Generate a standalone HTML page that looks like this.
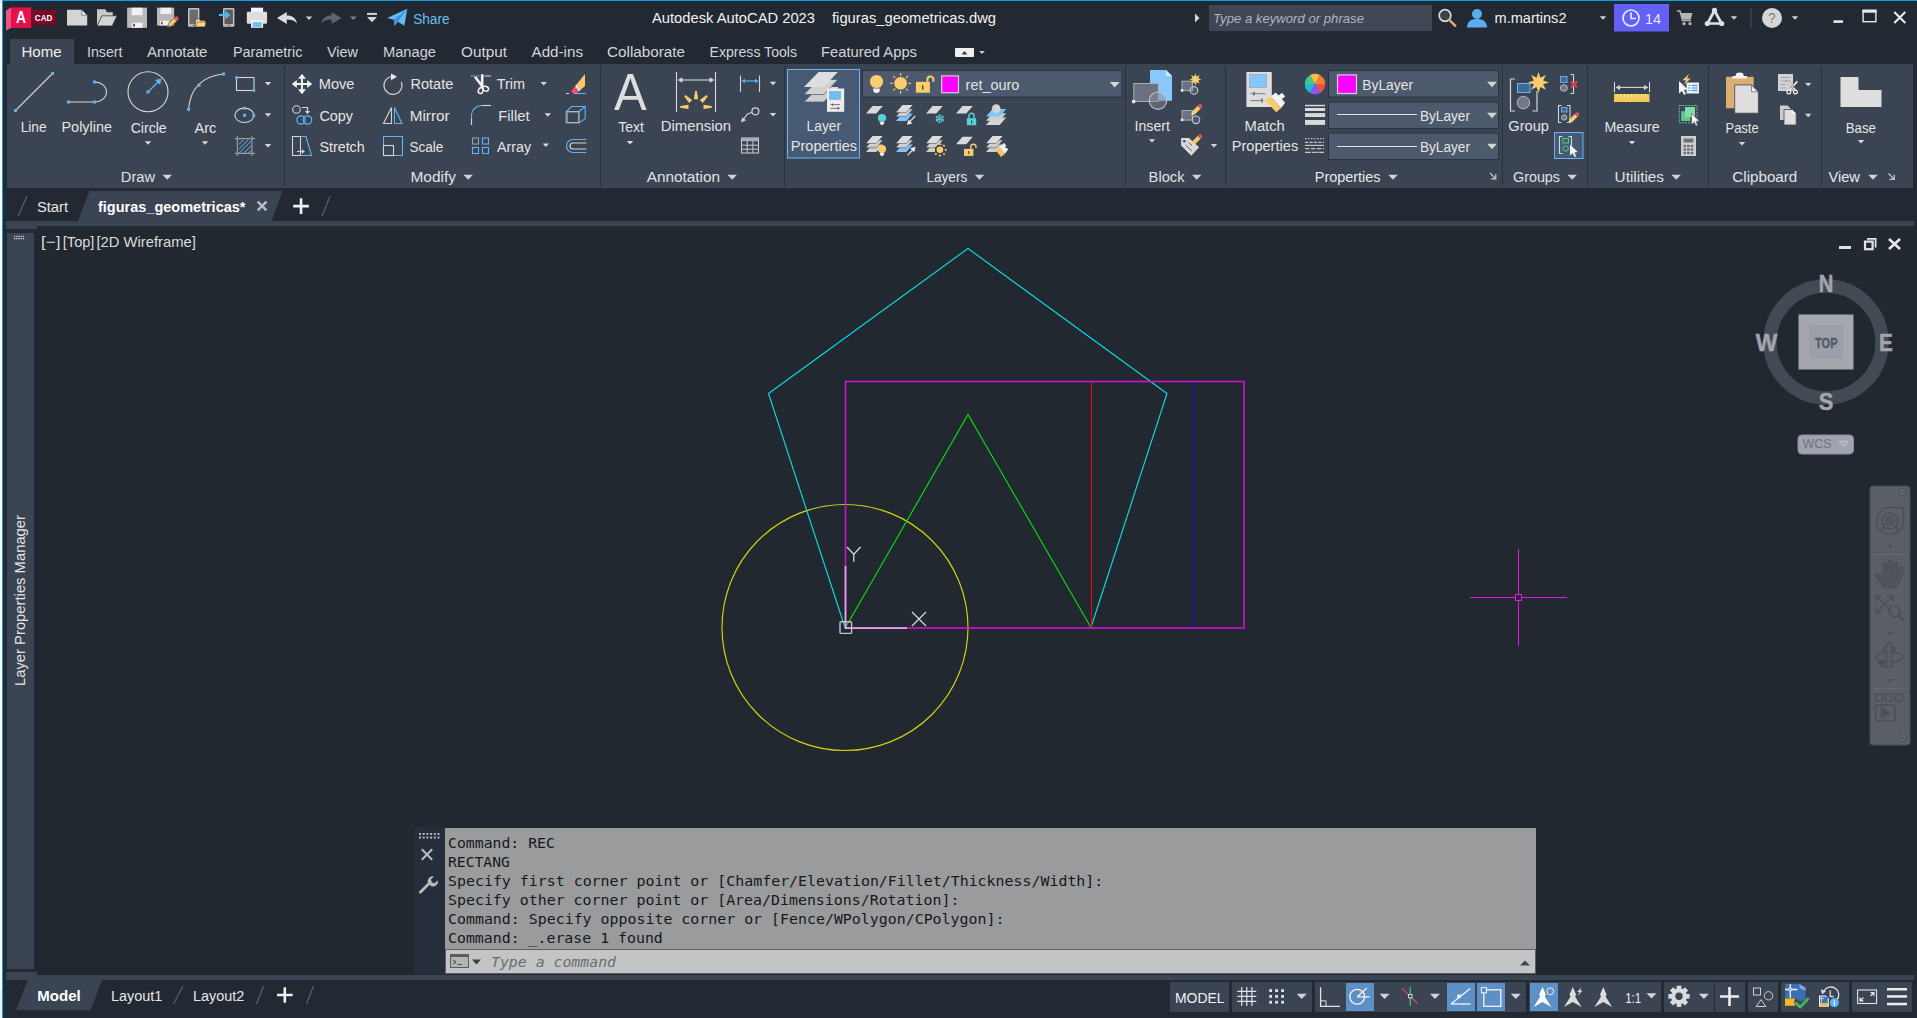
<!DOCTYPE html>
<html><head><meta charset="utf-8"><title>Autodesk AutoCAD 2023 - figuras_geometricas.dwg</title>
<style>
html,body{margin:0;padding:0;background:#222933;overflow:hidden}
svg{display:block;font-family:'Liberation Sans', sans-serif}
text{white-space:pre}
</style></head><body>
<svg width="1917" height="1018" viewBox="0 0 1917 1018">
<rect x="0" y="0" width="1917" height="1018" fill="#222933" />
<rect x="0" y="0" width="2" height="1018" fill="#ffffff" />
<rect x="0" y="0" width="2" height="28" fill="#f3f3f3" />
<rect x="0" y="990" width="2" height="28" fill="#f0eeec" />
<rect x="2" y="0" width="1" height="1018" fill="#0e9fe6" />
<rect x="2" y="0" width="1915" height="1" fill="#0e9fe6" />
<rect x="10" y="39" width="64" height="26" fill="#3b4453" />
<rect x="7" y="64" width="1906" height="124" fill="#3b4453" />
<rect x="6" y="221" width="1908" height="5" fill="#3b4453" />
<rect x="6" y="221" width="31" height="8" fill="#3b4453" />
<rect x="37" y="226" width="1880" height="749" fill="#212830" />
<rect x="7" y="233" width="27" height="736" fill="#3b4453" />
<rect x="6" y="975" width="1908" height="5" fill="#3b4453" />
<rect x="6" y="972" width="31" height="8" fill="#3b4453" />
<path d="M6 10.500L11 7.500V28L6 30.500z" fill="#e9577f"/>
<rect x="11" y="7.4" width="20.2" height="20.6" fill="#e5104c" />
<rect x="31.2" y="10" width="24.8" height="15" fill="#7c0827" />
<text x="16" y="22.8" font-size="15.7" fill="#ffffff" font-weight="bold" textLength="10" lengthAdjust="spacingAndGlyphs" >A</text>
<text x="34.8" y="20.9" font-size="9.5" fill="#ffffff" font-weight="bold" textLength="17.5" lengthAdjust="spacingAndGlyphs" >CAD</text>
<path d="M67 9.800h14.800l5.400 5.400V25.500H67z" fill="#d4d4d4"/><path d="M81.800 9.800v5.400h5.400z" fill="#f4f4f4" stroke="#3a404a" stroke-width="0.600"/>
<path d="M97 9.200h8.300l1.800 3.100h5.700V16h-11l-4.800 9.900z" fill="#c9c9c9"/><path d="M101.900 15.800H117L112.200 25.900H97z" fill="#d4d4d4" stroke="#2a303a" stroke-width="0.700"/>
<rect x="127.100" y="7.700" width="19.900" height="20.100" fill="#b9b9b9"/><rect x="131.700" y="7.700" width="10.900" height="7.500" fill="#f0f0f0"/><rect x="131.700" y="22.700" width="10.900" height="5.100" fill="#f2f2f2"/><rect x="133.200" y="23.800" width="1.700" height="2.800" fill="#3a3f48"/>
<rect x="157" y="7.700" width="17.200" height="17.800" fill="#b9b9b9"/><rect x="160.400" y="7.700" width="10.900" height="6.300" fill="#f0f0f0"/><rect x="159.800" y="20.900" width="9" height="4.600" fill="#f2f2f2"/><rect x="161" y="21.900" width="1.500" height="2.500" fill="#3a3f48"/>
<path d="M167.300 27.500l1.300-4.300l5.800-5.700l3 3l-5.800 5.700z" fill="#f2c568" stroke="#2a303a" stroke-width="0.500"/><path d="M173.600 18.300l1.400-1.400a2.100 2.100 0 0 1 3 3l-1.400 1.400z" fill="#ee5560"/><path d="M167.300 27.500l.9-2.800l1.900 1.900z" fill="#6a6d73"/>
<rect x="188" y="8" width="11.400" height="18.700" rx="1.200" fill="#c2c2c2"/><rect x="189.500" y="9.500" width="8.400" height="14.700" fill="#6b6b6b"/><rect x="192.700" y="25" width="2" height="0.900" fill="#555"/>
<path d="M195.400 19h4l1.200 1.600h4.600v6.100h-9.800z" fill="#f8cd6e" stroke="#2a303a" stroke-width="0.500"/><path d="M197.400 22.200h8.800l-1.600 4.500h-9.200z" fill="#fad583" stroke="#2a303a" stroke-width="0.400"/>
<rect x="223" y="8" width="11.400" height="18.700" rx="1.200" fill="#c2c2c2"/><rect x="224.500" y="9.500" width="8.400" height="14.700" fill="#5a5a5a"/><rect x="227.700" y="25" width="2" height="0.900" fill="#555"/>
<path d="M218.900 15h8" stroke="#52b4f4" stroke-width="2.200" fill="none"/><path d="M225.300 10.700l5.300 4.300l-5.300 4.300z" fill="#52b4f4"/>
<rect x="251" y="7.700" width="12.100" height="5" fill="#f4f4f4"/><rect x="246.800" y="11.800" width="20.300" height="12" rx="1.300" fill="#dedede"/><rect x="251" y="20.400" width="12.100" height="7.400" fill="#f4f4f4"/><rect x="252.600" y="22.100" width="9.100" height="4.900" fill="#6fc0f8"/>
<path d="M277 17.900l9.800-6v3.500c5.500 0 9.200 2.500 10.200 8c-2.600-3-5.700-3.800-10.200-3.800v4.300z" fill="#dcdcdc"/>
<path d="M305.7 16.4h6.6l-3.3 3.6z" fill="#cfcfcf"/>
<path d="M341.400 17.900l-9.800-6v3.500c-5.500 0-9.200 2.500-10.200 8c2.600-3 5.700-3.800 10.200-3.800v4.300z" fill="#5f6570"/>
<path d="M350.0 16.4h6.6l-3.3 3.6z" fill="#7d838c"/>
<rect x="367" y="12.9" width="10" height="2" fill="#d4d4d4" />
<path d="M367 16.900h10l-5 5.400z" fill="#d4d4d4"/>
<path d="M387.200 17.900L407.300 8.700l-3 17.100l-6.300-4l-3.600 4l-.6-6z" fill="#62bbf6"/><path d="M393.800 19.800l13.500-11.100l-9.300 13.100l-3.600 4z" fill="#3d93d4"/>
<text x="413.2" y="24" font-size="15.2" fill="#6cbdf5" textLength="36.4" lengthAdjust="spacingAndGlyphs" >Share</text>
<text x="652" y="23" font-size="15.2" fill="#f2f2f2" textLength="163" lengthAdjust="spacingAndGlyphs" >Autodesk AutoCAD 2023</text>
<text x="832" y="23" font-size="15.2" fill="#f2f2f2" textLength="164" lengthAdjust="spacingAndGlyphs" >figuras_geometricas.dwg</text>
<path d="M1195 13.500v9l4.500-4.500z" fill="#d8d8d8"/>
<rect x="1209" y="5" width="223" height="26" fill="#3f4757" />
<text x="1213" y="23" font-size="13.2" fill="#aeb5c0" font-style="italic" textLength="151" lengthAdjust="spacingAndGlyphs" >Type a keyword or phrase</text>
<circle cx="1445" cy="15.500" r="5.800" fill="#3c424c" stroke="#dcdcdc" stroke-width="1.700"/><path d="M1449.300 19.800l6 6" stroke="#d9b27a" stroke-width="2.400" stroke-linecap="round"/>
<circle cx="1477" cy="14" r="5" fill="#5aaef0"/><path d="M1467 27.500c0-6 4-8.500 10-8.500s10 2.500 10 8.500z" fill="#5aaef0"/>
<text x="1494.5" y="23" font-size="15.2" fill="#f0f0f0" textLength="72.0" lengthAdjust="spacingAndGlyphs" >m.martins2</text>
<path d="M1599.7 16.2h6.6l-3.3 3.6z" fill="#cfcfcf"/>
<rect x="1614" y="4" width="55" height="27.5" fill="#6360f7" />
<circle cx="1631" cy="18" r="8" fill="none" stroke="#e8e8ff" stroke-width="1.700"/><path d="M1631 12.500v6h5" fill="none" stroke="#e8e8ff" stroke-width="1.700"/>
<text x="1645" y="23.5" font-size="15.2" fill="#e8e8ff" textLength="16" lengthAdjust="spacingAndGlyphs" >14</text>
<path d="M1677 11h3l2.500 9.500h8.500" fill="none" stroke="#b6b6b6" stroke-width="1.500"/><path d="M1681 13h11.500l-1.800 6.500h-8z" fill="#b6b6b6"/><circle cx="1684" cy="23.700" r="1.600" fill="#b6b6b6"/><circle cx="1690" cy="23.700" r="1.600" fill="#b6b6b6"/>
<path d="M1714.500 10.500l-7 13h14z" fill="none" stroke="#e0e0e0" stroke-width="2.700" stroke-linejoin="round"/><circle cx="1714.500" cy="10.300" r="2.600" fill="#e0e0e0"/><circle cx="1707.300" cy="23.500" r="2.600" fill="#e0e0e0"/><circle cx="1721.700" cy="23.500" r="2.600" fill="#e0e0e0"/>
<path d="M1730.7 16.2h6.6l-3.3 3.6z" fill="#cfcfcf"/>
<rect x="1750.5" y="8" width="1" height="21" fill="#4a5260" />
<circle cx="1772" cy="18" r="10" fill="#d6d6d6"/>
<text x="1768.3" y="23.3" font-size="15.5" fill="#7c7c7c" textLength="7.4" lengthAdjust="spacingAndGlyphs" >?</text>
<path d="M1791.7 16.2h6.6l-3.3 3.6z" fill="#cfcfcf"/>
<rect x="1833.5" y="20.3" width="9.5" height="2.6" fill="#e8e8e8" />
<rect x="1863.100" y="10.400" width="12.800" height="11.300" fill="none" stroke="#e8e8e8" stroke-width="1.400"/><rect x="1862.400" y="9.700" width="14.200" height="3" fill="#e8e8e8"/>
<path d="M1894.300 12l11 11M1905.300 12l-11 11" stroke="#ececec" stroke-width="2" fill="none"/>
<text x="21.5" y="57" font-size="15.2" fill="#f0f0f0" textLength="40.0" lengthAdjust="spacingAndGlyphs" >Home</text>
<text x="87" y="57" font-size="15.2" fill="#d2d5d9" textLength="35.5" lengthAdjust="spacingAndGlyphs" >Insert</text>
<text x="147" y="57" font-size="15.2" fill="#d2d5d9" textLength="60.5" lengthAdjust="spacingAndGlyphs" >Annotate</text>
<text x="233" y="57" font-size="15.2" fill="#d2d5d9" textLength="69.5" lengthAdjust="spacingAndGlyphs" >Parametric</text>
<text x="327" y="57" font-size="15.2" fill="#d2d5d9" textLength="31" lengthAdjust="spacingAndGlyphs" >View</text>
<text x="383" y="57" font-size="15.2" fill="#d2d5d9" textLength="53" lengthAdjust="spacingAndGlyphs" >Manage</text>
<text x="461" y="57" font-size="15.2" fill="#d2d5d9" textLength="46" lengthAdjust="spacingAndGlyphs" >Output</text>
<text x="531.5" y="57" font-size="15.2" fill="#d2d5d9" textLength="51.5" lengthAdjust="spacingAndGlyphs" >Add-ins</text>
<text x="607" y="57" font-size="15.2" fill="#d2d5d9" textLength="78" lengthAdjust="spacingAndGlyphs" >Collaborate</text>
<text x="709.5" y="57" font-size="15.2" fill="#d2d5d9" textLength="87.5" lengthAdjust="spacingAndGlyphs" >Express Tools</text>
<text x="821" y="57" font-size="15.2" fill="#d2d5d9" textLength="96" lengthAdjust="spacingAndGlyphs" >Featured Apps</text>
<rect x="955" y="48" width="19" height="9" rx="1" fill="#f0f0f0"/><path d="M961.500 54.500h6l-3-3.400z" fill="#3a404a"/>
<path d="M979.2 51.0h5.6l-2.8 3z" fill="#cfcfcf"/>
<path d="M89.500 191H282.500L271.500 221H78z" fill="#3b4453"/>
<line x1="18" y1="216" x2="27" y2="196" stroke="#596272" stroke-width="1.2" />
<text x="37" y="212" font-size="15.2" fill="#e6e6e6" textLength="31" lengthAdjust="spacingAndGlyphs" >Start</text>
<text x="98" y="212" font-size="15.2" fill="#ffffff" font-weight="bold" textLength="147.5" lengthAdjust="spacingAndGlyphs" >figuras_geometricas*</text>
<path d="M257.700 201.600l8.800 8.800M266.500 201.600l-8.800 8.800" stroke="#b8bcc4" stroke-width="2.500" fill="none"/>
<path d="M293.200 206.100h15.700M301.050 198.300v15.700" stroke="#f0f0f0" stroke-width="2.600" fill="none"/>
<line x1="322" y1="216" x2="330.2" y2="196" stroke="#596272" stroke-width="1.2" />
<rect x="284.0" y="65.5" width="1" height="121" fill="#2a313c" />
<rect x="600.0" y="65.5" width="1" height="121" fill="#2a313c" />
<rect x="784.0" y="65.5" width="1" height="121" fill="#2a313c" />
<rect x="1125.0" y="65.5" width="1" height="121" fill="#2a313c" />
<rect x="1225.0" y="65.5" width="1" height="121" fill="#2a313c" />
<rect x="1502.0" y="65.5" width="1" height="121" fill="#2a313c" />
<rect x="1587.0" y="65.5" width="1" height="121" fill="#2a313c" />
<rect x="1708.0" y="65.5" width="1" height="121" fill="#2a313c" />
<rect x="1821.0" y="65.5" width="1" height="121" fill="#2a313c" />
<line x1="15.5" y1="110.5" x2="52.5" y2="73.5" stroke="#d6d6d6" stroke-width="1.1" />
<rect x="14.0" y="109.0" width="3" height="3" fill="#5fb4f4" />
<rect x="51.0" y="72.0" width="3" height="3" fill="#5fb4f4" />
<text x="20.7" y="131.6" font-size="15.2" fill="#e4e4e4" textLength="25.9" lengthAdjust="spacingAndGlyphs" >Line</text>
<path d="M68.5 102H94.500A12 10 0 0 0 94.500 82" fill="none" stroke="#d6d6d6" stroke-width="1.1"/>
<rect x="67.0" y="100.5" width="3" height="3" fill="#5fb4f4" />
<rect x="93.0" y="100.5" width="3" height="3" fill="#5fb4f4" />
<rect x="93.0" y="80.5" width="3" height="3" fill="#5fb4f4" />
<text x="61.5" y="131.6" font-size="15.2" fill="#e4e4e4" textLength="50.5" lengthAdjust="spacingAndGlyphs" >Polyline</text>
<circle cx="148" cy="91.700" r="20" fill="none" stroke="#d6d6d6" stroke-width="1.1"/>
<path d="M148 92L159 81" stroke="#5fb4f4" stroke-width="1.300"/><path d="M161.500 78.500l-1.500 6.500l-5-5z" fill="#5fb4f4"/>
<rect x="146.5" y="90.5" width="3" height="3" fill="#5fb4f4" />
<text x="130.7" y="132.7" font-size="15.2" fill="#e4e4e4" textLength="36.0" lengthAdjust="spacingAndGlyphs" >Circle</text>
<path d="M144.8 141.3h6.4l-3.2 3.4z" fill="#d8d8d8"/>
<path d="M188.600 109.400C190 88 203 76 223.500 74" fill="none" stroke="#d6d6d6" stroke-width="1.100"/>
<rect x="187.1" y="107.9" width="3" height="3" fill="#5fb4f4" />
<rect x="197.5" y="83.8" width="3" height="3" fill="#5fb4f4" />
<rect x="222.0" y="72.5" width="3" height="3" fill="#5fb4f4" />
<text x="194.5" y="132.7" font-size="15.2" fill="#e4e4e4" textLength="21.8" lengthAdjust="spacingAndGlyphs" >Arc</text>
<path d="M201.8 141.3h6.4l-3.2 3.4z" fill="#d8d8d8"/>
<rect x="236.500" y="77.500" width="17.500" height="13" fill="none" stroke="#d6d6d6" stroke-width="1.100"/>
<rect x="235.2" y="76.2" width="2.6" height="2.6" fill="#5fb4f4" />
<rect x="252.7" y="89.2" width="2.6" height="2.6" fill="#5fb4f4" />
<path d="M264.8 82.1h6.4l-3.2 3.4z" fill="#d8d8d8"/>
<ellipse cx="244.400" cy="115.300" rx="9.500" ry="7.200" fill="none" stroke="#d6d6d6" stroke-width="1.100"/>
<rect x="243.0" y="113.8" width="3" height="3" fill="#5fb4f4" />
<rect x="252.2" y="113.8" width="3" height="3" fill="#5fb4f4" />
<rect x="243.0" y="106.7" width="3" height="3" fill="#5fb4f4" />
<path d="M264.8 113.3h6.4l-3.2 3.4z" fill="#d8d8d8"/>
<path d="M238.800 144.500l4.700-4.700M238.800 149.300l9.500-9.500M239.300 153l12-12.200M244 153l7.500-7.500M248.500 153l3-3" stroke="#5fb4f4" stroke-width="1" fill="none"/>
<path d="M235 138.600H255M235 153.400H255M237.400 136V156M251.900 136V156" stroke="#989da6" stroke-width="1.100" fill="none"/>
<path d="M264.8 144.10000000000002h6.4l-3.2 3.4z" fill="#d8d8d8"/>
<text x="120.8" y="181.7" font-size="15.2" fill="#e2e2e2" textLength="34.2" lengthAdjust="spacingAndGlyphs" >Draw</text>
<path d="M162.5 174.8h9.4l-4.7 5z" fill="#d4d4d4"/>
<path d="M302 73.800l4 5h-3v4.200h4.200v-3l5 4l-5 4v-3h-4.200v4.200h3l-4 5l-4-5h3v-4.200h-4.200v3l-5-4l5-4v3h4.200v-4.200h-3z" fill="#f2f2f2"/>
<text x="318.7" y="89.2" font-size="15.2" fill="#e4e4e4" textLength="35.8" lengthAdjust="spacingAndGlyphs" >Move</text>
<circle cx="296.500" cy="109.500" r="3.800" fill="none" stroke="#d6d6d6" stroke-width="1.100"/><path d="M302 107.500h5.500v4" fill="none" stroke="#d6d6d6" stroke-width="1.200"/><path d="M305 111l2.500 3.200l2.500-3.200z" fill="#d6d6d6"/>
<circle cx="301" cy="120" r="4.200" fill="none" stroke="#5fb4f4" stroke-width="1.200"/><circle cx="307.500" cy="120" r="4.200" fill="none" stroke="#5fb4f4" stroke-width="1.200"/>
<text x="319.5" y="120.7" font-size="15.2" fill="#e4e4e4" textLength="33.5" lengthAdjust="spacingAndGlyphs" >Copy</text>
<path d="M300.500 136.500H292.500V155.500H300.500" fill="none" stroke="#d6d6d6" stroke-width="1.100"/><path d="M300.500 136.500V155.500" stroke="#d6d6d6" stroke-width="1.100"/><path d="M300.500 136.500H306L311.500 155.500H300.500" fill="none" stroke="#5fb4f4" stroke-width="1.100"/><path d="M297 151.500h5.500" stroke="#d6d6d6" stroke-width="1.100"/><path d="M302 149.300l3 2.200l-3 2.200z" fill="#d6d6d6"/>
<text x="319.5" y="152" font-size="15.2" fill="#e4e4e4" textLength="45.2" lengthAdjust="spacingAndGlyphs" >Stretch</text>
<path d="M391.500 76.500A9 9 0 1 0 401.300 82" fill="none" stroke="#d6d6d6" stroke-width="1.200"/><path d="M391 73.500l6 3.200l-6 3.600z" fill="#ececec"/>
<text x="410.5" y="89.2" font-size="15.2" fill="#e4e4e4" textLength="42.8" lengthAdjust="spacingAndGlyphs" >Rotate</text>
<path d="M391.500 107.500V123.500H383.500z" fill="none" stroke="#d6d6d6" stroke-width="1.100"/><path d="M394.500 107.500V123.500H402z" fill="none" stroke="#5fb4f4" stroke-width="1.100"/>
<text x="409.7" y="120.7" font-size="15.2" fill="#e4e4e4" textLength="40.0" lengthAdjust="spacingAndGlyphs" >Mirror</text>
<path d="M383.500 145V136.500H402.500V155.500H394" fill="none" stroke="#5fb4f4" stroke-width="1.100"/><rect x="383.500" y="145.500" width="10" height="10" fill="none" stroke="#d6d6d6" stroke-width="1.100"/>
<text x="409.5" y="152" font-size="15.2" fill="#e4e4e4" textLength="33.8" lengthAdjust="spacingAndGlyphs" >Scale</text>
<path d="M471 76h8.500" stroke="#5fb4f4" stroke-width="1.300" stroke-dasharray="1.600 0.900"/><path d="M484.500 76h6.600" stroke="#b9bcc2" stroke-width="1.300"/>
<path d="M473.800 77.300l2.600-.8l7.400 9.700l-2 1.500z" fill="#f2f2f2"/><path d="M480.900 74.300h2.700l-.2 12.200l-2.600.4z" fill="#f2f2f2"/>
<ellipse cx="480.700" cy="90.600" rx="2.300" ry="3" fill="none" stroke="#f2f2f2" stroke-width="1.500" transform="rotate(20 480.700 90.600)"/><ellipse cx="485.600" cy="88.700" rx="3" ry="2.300" fill="none" stroke="#f2f2f2" stroke-width="1.500" transform="rotate(20 485.600 88.700)"/>
<text x="496.7" y="89.2" font-size="15.2" fill="#e4e4e4" textLength="28.3" lengthAdjust="spacingAndGlyphs" >Trim</text>
<path d="M540.5 82.0h6.4l-3.2 3.4z" fill="#d8d8d8"/>
<path d="M471.500 125V115A10 10 0 0 1 481.500 105.500" fill="none" stroke="#5fb4f4" stroke-width="1.100"/><path d="M481.500 105.500H491" stroke="#d6d6d6" stroke-width="1.100"/><path d="M471.500 119V125" stroke="#d6d6d6" stroke-width="1.100"/>
<text x="498.3" y="120.7" font-size="15.2" fill="#e4e4e4" textLength="31.2" lengthAdjust="spacingAndGlyphs" >Fillet</text>
<path d="M544.5999999999999 113.3h6.4l-3.2 3.4z" fill="#d8d8d8"/>
<rect x="472.500" y="138" width="6" height="6" fill="none" stroke="#9aa0aa" stroke-width="1.100"/><rect x="482.500" y="138" width="6" height="6" fill="none" stroke="#5fb4f4" stroke-width="1.100"/><rect x="472.500" y="147.500" width="6" height="6" fill="none" stroke="#5fb4f4" stroke-width="1.100"/><rect x="482.500" y="147.500" width="6" height="6" fill="none" stroke="#5fb4f4" stroke-width="1.100"/>
<text x="497" y="152" font-size="15.2" fill="#e4e4e4" textLength="34" lengthAdjust="spacingAndGlyphs" >Array</text>
<path d="M542.5999999999999 143.60000000000002h6.4l-3.2 3.4z" fill="#d8d8d8"/>
<path d="M576.500 84.500l8.500-10.500v12l-4.500 4z" fill="#f5c86a"/><path d="M571.500 90.500l5-6l4 5.500l-3.500 3c-2 1.500-6.500 0-5.500-2.500z" fill="#ee4f58"/><path d="M575.200 86.200l1.300-1.700l4 5.500l-1.500 1.300z" fill="#f4f4f4"/>
<path d="M566 93.500h3" stroke="#d6d6d6" stroke-width="1"/><path d="M574 93.500h12" stroke="#5fb4f4" stroke-width="1.100"/>
<path d="M566.500 111.500l5-5h13.700v12.200l-6 4.200" fill="none" stroke="#5fb4f4" stroke-width="1.100"/><path d="M579 111.500l6.200-5" fill="none" stroke="#5fb4f4" stroke-width="1.100"/><rect x="566.900" y="111.700" width="12" height="11" fill="none" stroke="#b9bcc2" stroke-width="1.300"/><path d="M566 111v12.400" stroke="#5fb4f4" stroke-width="0.800"/>
<path d="M586.300 139.500H573A6.500 6.500 0 0 0 573 152.500H586.300" fill="none" stroke="#5fb4f4" stroke-width="1.200"/><path d="M586.300 143H573A3 3 0 0 0 573 149H586.300" fill="none" stroke="#d6d6d6" stroke-width="1.200"/>
<text x="410.5" y="181.7" font-size="15.2" fill="#e2e2e2" textLength="45.5" lengthAdjust="spacingAndGlyphs" >Modify</text>
<path d="M463.5 174.8h9.4l-4.7 5z" fill="#d4d4d4"/>
<text x="614" y="109.6" font-size="51" fill="#dedede" textLength="32.7" lengthAdjust="spacingAndGlyphs" >A</text>
<text x="618.3" y="132.4" font-size="15.2" fill="#e4e4e4" textLength="25.6" lengthAdjust="spacingAndGlyphs" >Text</text>
<path d="M626.8 141.0h6.4l-3.2 3.4z" fill="#d8d8d8"/>
<path d="M676.500 72V112M715.500 72V112" stroke="#d6d6d6" stroke-width="1.100"/><path d="M681 80H711" stroke="#d6d6d6" stroke-width="1.100"/><path d="M677.500 80l5-2.800v5.600zM714.500 80l-5-2.800v5.600z" fill="#d6d6d6"/>
<path d="M-2.100 -7.500L-0.900 -15.800H0.900L2.100 -7.500z" fill="#f8cd6e" transform="translate(696,106.800) rotate(-90)"/>
<path d="M-2.100 -7.500L-0.900 -15.800H0.900L2.100 -7.500z" fill="#f8cd6e" transform="translate(696,106.800) rotate(-45)"/>
<path d="M-2.100 -7.500L-0.900 -15.800H0.900L2.100 -7.500z" fill="#f8cd6e" transform="translate(696,106.800) rotate(0)"/>
<path d="M-2.100 -7.500L-0.900 -15.800H0.900L2.100 -7.500z" fill="#f8cd6e" transform="translate(696,106.800) rotate(45)"/>
<path d="M-2.100 -7.500L-0.900 -15.800H0.900L2.100 -7.500z" fill="#f8cd6e" transform="translate(696,106.800) rotate(90)"/>
<text x="660.8" y="131.4" font-size="15.2" fill="#e4e4e4" textLength="70.2" lengthAdjust="spacingAndGlyphs" >Dimension</text>
<path d="M740.500 75.500V92M759.500 75.500V92" stroke="#d6d6d6" stroke-width="1.100"/><path d="M743.500 81H756.500" stroke="#5fb4f4" stroke-width="1.200"/><path d="M741.500 81l3.500-2.200v4.400zM758.500 81l-3.500-2.200v4.400z" fill="#5fb4f4"/>
<path d="M769.8 81.8h6.4l-3.2 3.4z" fill="#d8d8d8"/>
<circle cx="755.400" cy="111.300" r="3.500" fill="none" stroke="#d6d6d6" stroke-width="1.200"/><path d="M752 112.500l-4.500 1.500l-4.500 6" fill="none" stroke="#d6d6d6" stroke-width="1.200"/><path d="M741 122.500l1.200-5.200l3.800 3z" fill="#d6d6d6"/>
<path d="M769.8 113.1h6.4l-3.2 3.4z" fill="#d8d8d8"/>
<rect x="741.500" y="138" width="17" height="15" fill="none" stroke="#c8c8c8" stroke-width="1.100"/><rect x="741.500" y="138" width="17" height="3.200" fill="#a9adb3"/><path d="M741.500 145.200h17M741.500 149.200h17M747.200 141v12M752.900 141v12" stroke="#c8c8c8" stroke-width="1"/>
<text x="646.7" y="181.7" font-size="15.2" fill="#e2e2e2" textLength="73.3" lengthAdjust="spacingAndGlyphs" >Annotation</text>
<path d="M727.5 174.8h9.4l-4.7 5z" fill="#d4d4d4"/>
<rect x="787.500" y="69.500" width="72" height="88.500" fill="#465a73" stroke="#6db3f2" stroke-width="1"/>
<path d="M818.600 87.0h19.300l-14.100 15h-19.800z" fill="#cdcdcd"/>
<path d="M818.600 87.0h19.300l-14.100 15h-19.800z" fill="none" stroke="#465a73" stroke-width="0.700"/>
<path d="M818.600 79.5h19.300l-14.100 15h-19.800z" fill="#d2d2d2"/>
<path d="M818.600 79.5h19.300l-14.100 15h-19.800z" fill="none" stroke="#465a73" stroke-width="0.700"/>
<path d="M818.600 72.0h19.300l-14.100 15h-19.800z" fill="#dedede"/>
<rect x="831" y="87" width="7" height="3" fill="#dcdcdc"/><rect x="827" y="88.500" width="17.200" height="23.300" fill="#ececec"/><rect x="829.300" y="91.400" width="11.300" height="8" fill="#6ebcf8" stroke="#9aa0a8" stroke-width="0.600"/><path d="M830.500 104.600h9.500M830.500 108.300h9.500" stroke="#666" stroke-width="0.900"/><path d="M832.500 103.400v2.400M838 107.100v2.400" stroke="#555" stroke-width="1.100"/>
<text x="806.6" y="131.4" font-size="15.2" fill="#e4e4e4" textLength="34.4" lengthAdjust="spacingAndGlyphs" >Layer</text>
<text x="790.8" y="151.4" font-size="15.2" fill="#e4e4e4" textLength="66.2" lengthAdjust="spacingAndGlyphs" >Properties</text>
<rect x="862.500" y="70.500" width="259.500" height="26.500" fill="#4d596d" stroke="#2c333f" stroke-width="1"/>
<circle cx="876.500" cy="81.500" r="6.600" fill="#f8cd6e"/><path d="M873.200 88.600h6.600v1.300a3.300 3 0 0 1-6.600 0z" fill="#f2f2f2"/>
<circle cx="900.600" cy="83.300" r="6.300" fill="#f8cd6e"/>
<path d="M0 -7.600V-10.400" stroke="#f8cd6e" stroke-width="1.100" transform="translate(900.600,83.300) rotate(0)"/>
<path d="M0 -7.600V-10.400" stroke="#f8cd6e" stroke-width="1.100" transform="translate(900.600,83.300) rotate(45)"/>
<path d="M0 -7.600V-10.400" stroke="#f8cd6e" stroke-width="1.100" transform="translate(900.600,83.300) rotate(90)"/>
<path d="M0 -7.600V-10.400" stroke="#f8cd6e" stroke-width="1.100" transform="translate(900.600,83.300) rotate(135)"/>
<path d="M0 -7.600V-10.400" stroke="#f8cd6e" stroke-width="1.100" transform="translate(900.600,83.300) rotate(180)"/>
<path d="M0 -7.600V-10.400" stroke="#f8cd6e" stroke-width="1.100" transform="translate(900.600,83.300) rotate(225)"/>
<path d="M0 -7.600V-10.400" stroke="#f8cd6e" stroke-width="1.100" transform="translate(900.600,83.300) rotate(270)"/>
<path d="M0 -7.600V-10.400" stroke="#f8cd6e" stroke-width="1.100" transform="translate(900.600,83.300) rotate(315)"/>
<rect x="915.900" y="81.800" width="14" height="10.900" fill="#f8cd6e"/><path d="M927.400 81.800v-2.300a3 3 0 0 1 6 0v2.300" fill="none" stroke="#f8cd6e" stroke-width="2.100"/><rect x="922" y="85.300" width="1.400" height="4.400" fill="#5b4a20"/>
<rect x="941.700" y="75.900" width="16.800" height="16.800" fill="#ff00ff" stroke="#cfd0da" stroke-width="1.200"/>
<text x="965.6" y="90.2" font-size="15.2" fill="#e4e4e4" textLength="53.8" lengthAdjust="spacingAndGlyphs" >ret_ouro</text>
<path d="M1109.7 82.0h10l-5.0 5.4z" fill="#d4d4d4"/>
<path d="M872.5 106h10.3l-6.5 7.5h-10.3z" fill="#d9d9d9"/>
<circle cx="882" cy="118" r="4.100" fill="#58d0d8"/><path d="M879.6 122h4.800l-1 2.400l-1.400 .8l-1.400-.8z" fill="#f2f2f2"/>
<path d="M902.5 113.4h10.3l-6.5 7.5h-10.3z" fill="#7cc6fb"/>
<path d="M902.5 109.15h10.3l-6.5 7.5h-10.3z" fill="#cfcfcf"/>
<path d="M896 116.65h10.300l6.500 -7.500" fill="none" stroke="#4a505c" stroke-width="0.800" opacity="0.700"/>
<path d="M902.5 104.9h10.3l-6.5 7.5h-10.3z" fill="#dcdcdc"/>
<path d="M896 112.4h10.300l6.500 -7.500" fill="none" stroke="#4a505c" stroke-width="0.800" opacity="0.700"/>
<path d="M915.200 116l-6 6.300" stroke="#e0e0e0" stroke-width="1.200"/><path d="M907 124.800l1.400-5.400l4 4z" fill="#ececec"/>
<path d="M932.5 106h10.3l-6.5 7.5h-10.3z" fill="#d9d9d9"/>
<path d="M0 -4.600V4.600M-1.500 -3.600L0 -2.300L1.500 -3.600M-1.500 3.600L0 2.300L1.500 3.600" stroke="#58d0d8" stroke-width="0.900" fill="none" transform="translate(939.700,118.700) rotate(0)"/>
<path d="M0 -4.600V4.600M-1.500 -3.600L0 -2.300L1.500 -3.600M-1.500 3.600L0 2.300L1.500 3.600" stroke="#58d0d8" stroke-width="0.900" fill="none" transform="translate(939.700,118.700) rotate(60)"/>
<path d="M0 -4.600V4.600M-1.500 -3.600L0 -2.300L1.500 -3.600M-1.500 3.600L0 2.300L1.500 3.600" stroke="#58d0d8" stroke-width="0.900" fill="none" transform="translate(939.700,118.700) rotate(120)"/>
<path d="M962.5 106h10.3l-6.5 7.5h-10.3z" fill="#d9d9d9"/>
<rect x="966.8" y="118.2" width="9.400" height="7" fill="#58d0d8"/>
<path d="M968.9 118.2v-2.400a2.600 2.600 0 0 1 5.200 0v2.400" fill="none" stroke="#58d0d8" stroke-width="1.400"/>
<rect x="971.0" y="120.4" width="1.200" height="3" fill="#3b4453"/>
<path d="M992.5 117.5h13.7l-6.5 7.5h-13.7z" fill="#d6d6d6"/>
<path d="M992.5 113.3h13.7l-6.5 7.5h-13.7z" fill="#cfcfcf"/>
<path d="M992.5 109h13.7l-6.5 7.5h-13.7z" fill="#7cc6fb"/>
<circle cx="996.200" cy="108.600" r="4.300" fill="#d4d4d4"/>
<path d="M872.5 144.5h10.3l-6.5 7.5h-10.3z" fill="#cfcfcf"/>
<path d="M872.5 140.25h10.3l-6.5 7.5h-10.3z" fill="#cfcfcf"/>
<path d="M866 147.75h10.300l6.500 -7.500" fill="none" stroke="#4a505c" stroke-width="0.800" opacity="0.700"/>
<path d="M872.5 136.0h10.3l-6.5 7.5h-10.3z" fill="#dcdcdc"/>
<path d="M866 143.5h10.300l6.500 -7.500" fill="none" stroke="#4a505c" stroke-width="0.800" opacity="0.700"/>
<circle cx="882" cy="149.1" r="4.100" fill="#f8cd6e"/><path d="M879.6 153.1h4.800l-1 2.400l-1.400 .8l-1.400-.8z" fill="#f2f2f2"/>
<path d="M902.5 144.5h10.3l-6.5 7.5h-10.3z" fill="#7cc6fb"/>
<path d="M902.5 140.25h10.3l-6.5 7.5h-10.3z" fill="#cfcfcf"/>
<path d="M896 147.75h10.300l6.500 -7.500" fill="none" stroke="#4a505c" stroke-width="0.800" opacity="0.700"/>
<path d="M902.5 136.0h10.3l-6.5 7.5h-10.3z" fill="#dcdcdc"/>
<path d="M896 143.5h10.300l6.500 -7.500" fill="none" stroke="#4a505c" stroke-width="0.800" opacity="0.700"/>
<path d="M907.500 155.300l6-6.300" stroke="#e0e0e0" stroke-width="1.200"/><path d="M915.600 146.800l-1.400 5.400l-4-4z" fill="#ececec"/>
<path d="M932.5 144.5h10.3l-6.5 7.5h-10.3z" fill="#cfcfcf"/>
<path d="M932.5 140.25h10.3l-6.5 7.5h-10.3z" fill="#cfcfcf"/>
<path d="M926 147.75h10.300l6.500 -7.500" fill="none" stroke="#4a505c" stroke-width="0.800" opacity="0.700"/>
<path d="M932.5 136.0h10.3l-6.5 7.5h-10.3z" fill="#dcdcdc"/>
<path d="M926 143.5h10.300l6.500 -7.500" fill="none" stroke="#4a505c" stroke-width="0.800" opacity="0.700"/>
<circle cx="939.900" cy="149.800" r="5.200" fill="#3b4453"/><circle cx="939.900" cy="149.800" r="3.300" fill="#f8cd6e"/>
<rect x="-0.900" y="-6.700" width="1.800" height="1.800" fill="#f8cd6e" transform="translate(939.900,149.800) rotate(0)"/>
<rect x="-0.900" y="-6.700" width="1.800" height="1.800" fill="#f8cd6e" transform="translate(939.900,149.800) rotate(45)"/>
<rect x="-0.900" y="-6.700" width="1.800" height="1.800" fill="#f8cd6e" transform="translate(939.900,149.800) rotate(90)"/>
<rect x="-0.900" y="-6.700" width="1.800" height="1.800" fill="#f8cd6e" transform="translate(939.900,149.800) rotate(135)"/>
<rect x="-0.900" y="-6.700" width="1.800" height="1.800" fill="#f8cd6e" transform="translate(939.900,149.800) rotate(180)"/>
<rect x="-0.900" y="-6.700" width="1.800" height="1.800" fill="#f8cd6e" transform="translate(939.900,149.800) rotate(225)"/>
<rect x="-0.900" y="-6.700" width="1.800" height="1.800" fill="#f8cd6e" transform="translate(939.900,149.800) rotate(270)"/>
<rect x="-0.900" y="-6.700" width="1.800" height="1.800" fill="#f8cd6e" transform="translate(939.900,149.800) rotate(315)"/>
<path d="M962.5 136.7h10.3l-6.5 7.5h-10.3z" fill="#d9d9d9"/>
<rect x="964" y="148.9" width="9.400" height="7" fill="#f8cd6e"/>
<path d="M970.8 148.9v-2a2.600 2.600 0 0 1 5.200 0v1.200" fill="none" stroke="#f8cd6e" stroke-width="1.400"/>
<rect x="968.2" y="151.1" width="1.200" height="3" fill="#3b4453"/>
<path d="M992.5 144.5h10.3l-6.5 7.5h-10.3z" fill="#cfcfcf"/>
<path d="M992.5 140.25h10.3l-6.5 7.5h-10.3z" fill="#cfcfcf"/>
<path d="M986 147.75h10.300l6.500 -7.500" fill="none" stroke="#4a505c" stroke-width="0.800" opacity="0.700"/>
<path d="M992.5 136.0h10.3l-6.5 7.5h-10.3z" fill="#dcdcdc"/>
<path d="M986 143.5h10.300l6.500 -7.500" fill="none" stroke="#4a505c" stroke-width="0.800" opacity="0.700"/>
<path d="M995.500 150l3.800-3l5.500 7l-3.800 3z" fill="#f5c85a"/><path d="M999.300 147l3.200-2.500l1.500-1.800l2.500 3.200l-2 1.200l3.800 1.800l-3.500 5z" fill="#f2f2f2"/>
<text x="926.4" y="181.7" font-size="15.2" fill="#e2e2e2" textLength="40.9" lengthAdjust="spacingAndGlyphs" >Layers</text>
<path d="M974.8 174.8h9.4l-4.7 5z" fill="#d4d4d4"/>
<path d="M1150 70h16l6 6v24.700h-22z" fill="#88c9fb"/><path d="M1166 70v6h6z" fill="#cfe8fb"/>
<rect x="1133.800" y="83.500" width="24.500" height="18" fill="#6c7180" stroke="#a9adb5" stroke-width="1"/><rect x="1132" y="100" width="3.200" height="3.200" fill="#e8e8e8"/>
<circle cx="1158" cy="100.700" r="8.700" fill="#8a8f9a" fill-opacity="0.450" stroke="#c4c7cc" stroke-width="1.100"/>
<text x="1134.5" y="131" font-size="15.2" fill="#e4e4e4" textLength="35.5" lengthAdjust="spacingAndGlyphs" >Insert</text>
<path d="M1148.8 139.20000000000002h6.4l-3.2 3.4z" fill="#d8d8d8"/>
<rect x="1182" y="81.2" width="10.600" height="9.500" fill="#6c7180" stroke="#b4b7be" stroke-width="0.900"/><rect x="1180.8" y="89.2" width="2.500" height="2.500" fill="#ececec"/><circle cx="1194" cy="90.4" r="3.800" fill="#8a8f9a" fill-opacity="0.300" stroke="#c4c7cc" stroke-width="1.100"/>
<path d="M0 -6L1.200 -2.900L4.200 -4.200L2.900 -1.200L6 0L2.900 1.200L4.200 4.200L1.200 2.900L0 6L-1.200 2.900L-4.200 4.200L-2.900 1.200L-6 0L-2.900 -1.200L-4.200 -4.200L-1.200 -2.900z" fill="#f8cd6e" transform="translate(1195.400,79.400)"/>
<rect x="1182" y="110.6" width="10.600" height="9.500" fill="#6c7180" stroke="#b4b7be" stroke-width="0.900"/><rect x="1180.8" y="118.6" width="2.500" height="2.500" fill="#ececec"/><circle cx="1196" cy="119.8" r="3.800" fill="#8a8f9a" fill-opacity="0.300" stroke="#c4c7cc" stroke-width="1.100"/>
<g transform="translate(1191,107.6) scale(0.87)"><path d="M0 9l1.500-4.800l6.200-6.200l3.300 3.300l-6.200 6.200z" fill="#f5c86a"/><path d="M7.700 -2l1.200-1.200a2.300 2.300 0 0 1 3.300 3.300l-1.200 1.200z" fill="#ee4f58"/><path d="M0 9l1.100-3.500l2.400 2.400z" fill="#e8e8e8"/><path d="M0 9l.5-1.500l1 1z" fill="#3a3f48"/></g>
<path d="M1181.100 138h7.900l10.100 9.300l-7.800 8.500l-10.200-10.400z" fill="#d9d9d9"/><circle cx="1184.300" cy="141.200" r="1.200" fill="#3b4453"/><path d="M1185.500 145l6.500 6M1188.500 142.500l3 2.800" stroke="#5a5f68" stroke-width="0.900"/>
<g transform="translate(1191,137.7) scale(0.87)"><path d="M0 9l1.500-4.800l6.200-6.200l3.300 3.300l-6.200 6.200z" fill="#f5c86a"/><path d="M7.700 -2l1.200-1.200a2.300 2.300 0 0 1 3.300 3.300l-1.200 1.200z" fill="#ee4f58"/><path d="M0 9l1.100-3.500l2.400 2.400z" fill="#e8e8e8"/><path d="M0 9l.5-1.500l1 1z" fill="#3a3f48"/></g>
<path d="M1210.8 144.10000000000002h6.4l-3.2 3.4z" fill="#d8d8d8"/>
<text x="1148.6" y="181.7" font-size="15.2" fill="#e2e2e2" textLength="35.9" lengthAdjust="spacingAndGlyphs" >Block</text>
<path d="M1192.0 174.8h9.4l-4.7 5z" fill="#d4d4d4"/>
<rect x="1246.400" y="72" width="25.400" height="35" fill="#dddddd"/><rect x="1249.400" y="74.300" width="17.100" height="13.100" fill="#84c8fb" stroke="#9aa0a8" stroke-width="0.700"/><path d="M1250.500 93.700h15M1250.500 100.600h12" stroke="#7a7a7a" stroke-width="1"/><path d="M1254 91.800v3.800M1262 98.600v4" stroke="#666" stroke-width="1.500"/>
<path d="M1265.100 100.600l5.500-4.100l10.600 11.500l-5 4.200z" fill="#f8cd6e"/><path d="M1270.600 96.500l5.200-4l2.800 3l3.400-2.700l3.200 3.700l-3.300 2.600l3.200 3.600l-3.900 5.300z" fill="#f2f2f2"/>
<text x="1244.6" y="131.4" font-size="15.2" fill="#e4e4e4" textLength="40.2" lengthAdjust="spacingAndGlyphs" >Match</text>
<text x="1231.7" y="151.4" font-size="15.2" fill="#e4e4e4" textLength="66.5" lengthAdjust="spacingAndGlyphs" >Properties</text>
<path d="M1315 84.100L1309.90 75.27A10.200 10.200 0 0 1 1320.10 75.27z" fill="#fbbf3c"/>
<path d="M1315 84.100L1320.10 75.27A10.200 10.200 0 0 1 1325.20 84.10z" fill="#f77f2f"/>
<path d="M1315 84.100L1325.20 84.10A10.200 10.200 0 0 1 1320.10 92.93z" fill="#e5534b"/>
<path d="M1315 84.100L1320.10 92.93A10.200 10.200 0 0 1 1309.90 92.93z" fill="#8a55f7"/>
<path d="M1315 84.100L1309.90 92.93A10.200 10.200 0 0 1 1304.80 84.10z" fill="#25b3d6"/>
<path d="M1315 84.100L1304.80 84.10A10.200 10.200 0 0 1 1309.90 75.27z" fill="#3dc98a"/>
<rect x="1305" y="104.8" width="20.1" height="1.5" fill="#dadada" />
<rect x="1305" y="108" width="20.1" height="3" fill="#dadada" />
<rect x="1305" y="113.1" width="20.1" height="3.9" fill="#dadada" />
<rect x="1305" y="120" width="20.1" height="4.9" fill="#dadada" />
<path d="M1305 138.6h19" stroke="#c4c4c4" stroke-width="1.200" stroke-dasharray="1.500 1.500"/>
<path d="M1305 142.4h19" stroke="#c4c4c4" stroke-width="1.200" stroke-dasharray="3.200 1.200"/>
<path d="M1305 145.4h19" stroke="#c4c4c4" stroke-width="1.200" stroke-dasharray="20 0"/>
<path d="M1305 148.6h19" stroke="#c4c4c4" stroke-width="1.200" stroke-dasharray="4.500 1.500"/>
<path d="M1305 152.3h19" stroke="#c4c4c4" stroke-width="1.200" stroke-dasharray="6 0.800"/>
<rect x="1328.500" y="70.5" width="170" height="26.500" fill="#4d596d" stroke="#2c333f" stroke-width="1"/>
<rect x="1328.500" y="102" width="170" height="26.500" fill="#4d596d" stroke="#2c333f" stroke-width="1"/>
<rect x="1328.500" y="133" width="170" height="26.500" fill="#4d596d" stroke="#2c333f" stroke-width="1"/>
<rect x="1337.500" y="74.900" width="19" height="18.600" fill="#ff00ff" stroke="#cfd0da" stroke-width="1.200"/>
<text x="1362.3" y="90.2" font-size="15.2" fill="#e4e4e4" textLength="50.7" lengthAdjust="spacingAndGlyphs" >ByLayer</text>
<line x1="1337" y1="114.5" x2="1417" y2="114.5" stroke="#e4e4e4" stroke-width="1" />
<text x="1419.9" y="121.2" font-size="15.2" fill="#e4e4e4" textLength="50.1" lengthAdjust="spacingAndGlyphs" >ByLayer</text>
<line x1="1337" y1="146.5" x2="1417" y2="146.5" stroke="#e4e4e4" stroke-width="1" />
<text x="1419.9" y="152.1" font-size="15.2" fill="#e4e4e4" textLength="50.1" lengthAdjust="spacingAndGlyphs" >ByLayer</text>
<path d="M1487.0 81.8h10l-5.0 5.4z" fill="#d4d4d4"/>
<path d="M1487.0 112.8h10l-5.0 5.4z" fill="#d4d4d4"/>
<path d="M1487.0 143.8h10l-5.0 5.4z" fill="#d4d4d4"/>
<text x="1314.8" y="181.7" font-size="15.2" fill="#eaeaea" textLength="65.7" lengthAdjust="spacingAndGlyphs" >Properties</text>
<path d="M1388.3 174.8h9.4l-4.7 5z" fill="#d4d4d4"/>
<path d="M1490 173l5 5M1495.8 174v4.800h-4.800" fill="none" stroke="#c8c8c8" stroke-width="1.200"/>
<path d="M1515 79h-4.500v32h4.500M1532.500 111h4.500v-20" fill="none" stroke="#d6d6d6" stroke-width="1.200"/>
<rect x="1517.500" y="83.500" width="12.500" height="9" fill="#3f6a94" stroke="#6db6f4" stroke-width="1"/><circle cx="1523.400" cy="102.600" r="6.200" fill="#737885" stroke="#b9bcc2" stroke-width="1"/>
<path d="M0 -10.500L1.900 -4.600L7.400 -7.400L4.600 -1.900L10.500 0L4.600 1.900L7.400 7.400L1.900 4.600L0 10.500L-1.900 4.600L-7.400 7.400L-4.600 1.900L-10.500 0L-4.600 -1.900L-7.400 -7.400L-1.900 -4.600z" fill="#f8cd6e" transform="translate(1538.500,82.400)"/>
<text x="1508.3" y="131.4" font-size="15.2" fill="#e4e4e4" textLength="40.7" lengthAdjust="spacingAndGlyphs" >Group</text>
<rect x="1560.500" y="76.500" width="6.500" height="6" fill="#3f6a94" stroke="#6db6f4" stroke-width="0.900"/><ellipse cx="1563.800" cy="88" rx="3.600" ry="3.300" fill="#737885" stroke="#b9bcc2" stroke-width="0.900"/>
<path d="M1570.500 74.500h3v19h-3" fill="none" stroke="#d6d6d6" stroke-width="1.100"/><path d="M1571 81.500l6 6M1577 81.500l-6 6" stroke="#ee3b4a" stroke-width="1.800"/>
<path d="M1561.500 105.500h-3v17h3M1567 105.500h3v17h-3" fill="none" stroke="#d6d6d6" stroke-width="1.100"/><rect x="1561.500" y="107.500" width="5.500" height="4.500" fill="#3f6a94" stroke="#6db6f4" stroke-width="0.900"/><circle cx="1564.200" cy="117.500" r="2.700" fill="#737885" stroke="#b9bcc2" stroke-width="0.900"/>
<g transform="translate(1568.2,115.6) scale(0.85)"><path d="M0 9l1.500-4.800l6.200-6.200l3.300 3.300l-6.200 6.200z" fill="#f5c86a"/><path d="M7.700 -2l1.200-1.200a2.300 2.300 0 0 1 3.300 3.300l-1.200 1.200z" fill="#ee4f58"/><path d="M0 9l1.100-3.500l2.400 2.400z" fill="#e8e8e8"/><path d="M0 9l.5-1.500l1 1z" fill="#3a3f48"/></g>
<rect x="1554.500" y="132.500" width="28.500" height="26" fill="#465a73" stroke="#6db3f2" stroke-width="1"/>
<path d="M1562.500 136.500h-3v17h3M1568.500 136.500h3v9" fill="none" stroke="#d6d6d6" stroke-width="1.100"/><rect x="1563" y="138.500" width="5.500" height="4.500" fill="none" stroke="#4fd07a" stroke-width="1"/><circle cx="1565.700" cy="148.500" r="2.700" fill="none" stroke="#4fd07a" stroke-width="1"/>
<path d="M1570 144.500v11l2.700-2.300l1.800 3.800l1.700-.8l-1.800-3.800l3.400-.4z" fill="#f4f4f4"/>
<text x="1513" y="181.7" font-size="15.2" fill="#e2e2e2" textLength="47" lengthAdjust="spacingAndGlyphs" >Groups</text>
<path d="M1567.5 174.8h9.4l-4.7 5z" fill="#d4d4d4"/>
<path d="M1614.500 82V92.500M1649.500 82V92.500" stroke="#d6d6d6" stroke-width="1.100"/><path d="M1619 87.400H1645" stroke="#d6d6d6" stroke-width="1.100"/><path d="M1615.500 87.400l4.500-2.500v5zM1648.500 87.400l-4.500-2.500v5z" fill="#d6d6d6"/>
<rect x="1614" y="94" width="35.5" height="8" fill="#f5c85a" />
<path d="M1617.500 94v3M1621 94v4.500M1624.500 94v3M1628 94v4.500M1631.500 94v3M1635 94v4.500M1638.500 94v3M1642 94v4.500M1645.500 94v3" stroke="#fbe6ae" stroke-width="1"/>
<text x="1604.5" y="132.4" font-size="15.2" fill="#e4e4e4" textLength="55.2" lengthAdjust="spacingAndGlyphs" >Measure</text>
<path d="M1628.8 141.0h6.4l-3.2 3.4z" fill="#d8d8d8"/>
<path d="M1679 81v12.500l3-2.600l2 4.100l1.900-.9l-2-4.100l3.800-.4z" fill="#f4f4f4"/><path d="M1689 74l-6.500 6.200h3.600l-2.400 4.800l7-6.600h-3.700z" fill="#f8cd6e"/><rect x="1686.500" y="82.500" width="12.500" height="11" fill="#e4f1fb"/><path d="M1691.500 85.500h6M1691.500 88h6M1691.500 90.500h6" stroke="#3b94e0" stroke-width="1.100"/><path d="M1688.500 85.500h1.500M1688.500 88h1.500M1688.500 90.500h1.500" stroke="#3b94e0" stroke-width="1.100"/>
<rect x="1679.300" y="105.500" width="17.700" height="17.300" fill="none" stroke="#4fd07a" stroke-width="1" stroke-dasharray="2 1"/><path d="M1681.200 111.200h9v9.800h-9z" fill="#5cc98a"/><rect x="1685" y="107" width="10" height="10.200" fill="#84d9a6"/>
<path d="M1691.500 113.500v11l2.700-2.300l1.800 3.800l1.700-.8l-1.800-3.800l3.400-.4z" fill="#f4f4f4" stroke="#3b4453" stroke-width="0.500"/>
<rect x="1681" y="136" width="15" height="20" fill="#cfcfcf"/><rect x="1683.500" y="138.500" width="10" height="4" fill="#6d7076"/>
<rect x="1683.5" y="144.8" width="2.6" height="2.4" fill="#6d7076" />
<rect x="1687.1" y="144.8" width="2.6" height="2.4" fill="#6d7076" />
<rect x="1690.7" y="144.8" width="2.6" height="2.4" fill="#6d7076" />
<rect x="1683.5" y="148.3" width="2.6" height="2.4" fill="#6d7076" />
<rect x="1687.1" y="148.3" width="2.6" height="2.4" fill="#6d7076" />
<rect x="1690.7" y="148.3" width="2.6" height="2.4" fill="#6d7076" />
<rect x="1683.5" y="151.8" width="2.6" height="2.4" fill="#6d7076" />
<rect x="1687.1" y="151.8" width="2.6" height="2.4" fill="#6d7076" />
<rect x="1690.7" y="151.8" width="2.6" height="2.4" fill="#6d7076" />
<text x="1614.6" y="181.7" font-size="15.2" fill="#e2e2e2" textLength="49.4" lengthAdjust="spacingAndGlyphs" >Utilities</text>
<path d="M1671.5 174.8h9.4l-4.7 5z" fill="#d4d4d4"/>
<rect x="1726" y="76.800" width="27.700" height="31.500" fill="#dcae72"/><path d="M1732.500 78.500v-2.500h3.200c0-2.500 1-3.500 4-3.500s4 1 4 3.500h3.200v2.500z" fill="#f4f4f4"/>
<path d="M1734.700 84.900h17l6.700 6.700v21.600h-23.700z" fill="#dedede" stroke="#3b4453" stroke-width="0.800"/><path d="M1751.500 85.200v6.500h6.500z" fill="#f6f6f6" stroke="#3b4453" stroke-width="0.600"/>
<text x="1725.5" y="133.4" font-size="15.2" fill="#e4e4e4" textLength="33.1" lengthAdjust="spacingAndGlyphs" >Paste</text>
<path d="M1738.8 142.0h6.4l-3.2 3.4z" fill="#d8d8d8"/>
<rect x="1778" y="74" width="15" height="17" fill="#d4d4d4"/><path d="M1780.500 77.500h10M1780.500 81h10M1780.500 84.500h5M1780.500 88h6" stroke="#9a9da3" stroke-width="0.900"/>
<path d="M1786 81.200l1.700-1l8.600 9.600l-1.600 1zM1798.300 81.700l-1.700-1l-8.600 9.600l1.600 1z" fill="#f6f6f6" stroke="#3b4453" stroke-width="0.400"/><circle cx="1788.800" cy="92" r="1.900" fill="none" stroke="#f6f6f6" stroke-width="1.200"/><circle cx="1795.400" cy="92" r="1.900" fill="none" stroke="#f6f6f6" stroke-width="1.200"/>
<path d="M1805.0 82.89999999999999h6.4l-3.2 3.4z" fill="#d8d8d8"/>
<path d="M1780 105.500h7.500l3.500 3.500v11h-11z" fill="#cdcdcd"/><path d="M1784 109.500h8l4.200 4.200v11.300h-12.200z" fill="#dedede" stroke="#3b4453" stroke-width="0.800"/><path d="M1792 109.500v4.200h4.200z" fill="#f6f6f6"/>
<path d="M1805.0 113.8h6.4l-3.2 3.4z" fill="#d8d8d8"/>
<text x="1732.3" y="181.7" font-size="15.2" fill="#e2e2e2" textLength="65.0" lengthAdjust="spacingAndGlyphs" >Clipboard</text>
<path d="M1840.500 77h18v13h23v17h-41z" fill="#dedede"/>
<text x="1845.7" y="132.5" font-size="15.2" fill="#e4e4e4" textLength="30.3" lengthAdjust="spacingAndGlyphs" >Base</text>
<path d="M1857.8 140.0h6.4l-3.2 3.4z" fill="#d8d8d8"/>
<text x="1828.4" y="181.7" font-size="15.2" fill="#eaeaea" textLength="31.6" lengthAdjust="spacingAndGlyphs" >View</text>
<path d="M1868.3 174.8h9.4l-4.7 5z" fill="#d4d4d4"/>
<path d="M1888.5 173.5l5 5M1894.3 174.5v4.800h-4.800" fill="none" stroke="#c8c8c8" stroke-width="1.200"/>
<text x="41" y="247" font-size="15" fill="#dcdcdc" textLength="19.5" lengthAdjust="spacingAndGlyphs" >[−]</text>
<text x="62.8" y="247" font-size="15" fill="#dcdcdc" textLength="31.6" lengthAdjust="spacingAndGlyphs" >[Top]</text>
<text x="96.4" y="247" font-size="15" fill="#dcdcdc" textLength="99.4" lengthAdjust="spacingAndGlyphs" >[2D Wireframe]</text>
<g fill="none" stroke-width="1.15">
<circle cx="845" cy="627.5" r="123" stroke="#d4d410"/>
<path d="M968 248.5L1167 393.5L1091 627.5M845 627.5L768.5 393.5L968 248.5" stroke="#0adce0"/>
<path d="M845.5 627.5L968 414.5L1091 627.5" stroke="#0adc0a"/>
<path d="M1091.5 381V627" stroke="#dc0c0c"/>
<path d="M1193.5 381V627" stroke="#1010dc"/>
</g>
<rect x="845.5" y="381.5" width="398.5" height="246.5" fill="none" stroke="#d010d8" stroke-width="1.6"/>
<path d="M845.5 566V628.2H907" fill="none" stroke="#e6a6ea" stroke-width="1.7"/>
<rect x="840" y="621.8" width="11.6" height="11.6" rx="1" fill="none" stroke="#c4c4c8" stroke-width="1.4"/>
<path d="M847 547l6.8 7.2l6.8-7.2M853.8 554.2v7.6" fill="none" stroke="#d8d8d8" stroke-width="1.3"/>
<path d="M912 612l14 14M926 612l-14 14" fill="none" stroke="#d8d8d8" stroke-width="1.3"/>
<path d="M1470 597.5H1515M1522 597.5H1567M1518.5 549V594M1518.5 601V646" stroke="#e418e4" stroke-width="1" fill="none" shape-rendering="crispEdges"/>
<rect x="1515.5" y="594.5" width="6" height="6" fill="none" stroke="#e418e4" stroke-width="1" shape-rendering="crispEdges"/>
<rect x="1839" y="246" width="12" height="3" fill="#e4e4e4" />
<path d="M1867 238.8h8.6v8.6" fill="none" stroke="#e4e4e4" stroke-width="1.8"/>
<rect x="1865" y="241.6" width="7.6" height="7.6" fill="none" stroke="#e4e4e4" stroke-width="2.2"/>
<path d="M1889 239l11 10M1900 239l-11 10" stroke="#e8e8e8" stroke-width="2.6" fill="none"/>
<circle cx="1826" cy="342" r="56" fill="none" stroke="#434a53" stroke-width="13.4"/>
<rect x="1798.5" y="314.5" width="55" height="55" fill="#a4a8ad" />
<rect x="1809" y="325" width="34" height="34" fill="#9a9fa9" />
<text x="1815" y="347.8" font-size="15.5" fill="#535963" font-weight="bold" textLength="22.5" lengthAdjust="spacingAndGlyphs" stroke="#535963" stroke-width="0.3">TOP</text>
<text x="1818.7" y="291.5" font-size="23.8" fill="#a2a5a9" font-weight="bold" textLength="14.6" lengthAdjust="spacingAndGlyphs" stroke="#a2a5a9" stroke-width="0.5">N</text>
<text x="1818.7" y="410" font-size="23.8" fill="#a2a5a9" font-weight="bold" textLength="14.6" lengthAdjust="spacingAndGlyphs" stroke="#a2a5a9" stroke-width="0.5">S</text>
<text x="1879" y="351" font-size="23.8" fill="#a2a5a9" font-weight="bold" textLength="13.8" lengthAdjust="spacingAndGlyphs" stroke="#a2a5a9" stroke-width="0.5">E</text>
<text x="1755.7" y="351" font-size="23.8" fill="#a2a5a9" font-weight="bold" textLength="21.6" lengthAdjust="spacingAndGlyphs" stroke="#a2a5a9" stroke-width="0.5">W</text>
<rect x="1798" y="435" width="55.5" height="19" rx="4" fill="#a1a3b1" stroke="#8d8fa0" stroke-width="1"/>
<text x="1802.5" y="448.3" font-size="12.5" fill="#70737f" textLength="29.0" lengthAdjust="spacingAndGlyphs" >WCS</text>
<path d="M1839 441.3h9l-4.5 5.2z" fill="#a8aab6" stroke="#c9cad2" stroke-width="0.9"/>
<rect x="1870" y="486" width="40" height="259" rx="3" fill="#5a5f66" stroke="#4a4f57" stroke-width="1"/>
<g fill="none" stroke="#4b5058" stroke-width="1.6">
<circle cx="1902.5" cy="492" r="3.6" fill="#666b72" stroke-width="1"/><path d="M1900.8 490.3l3.4 3.4m0-3.4l-3.4 3.4" stroke-width="0.9"/>
<path d="M1876.5 521a13.5 13.5 0 1 0 27 0v-11.5a2 2 0 0 0-2-2h-11.5a13.5 13.5 0 0 0-13.5 13.5z"/><circle cx="1890" cy="521" r="8"/><circle cx="1890" cy="521" r="5" fill="#50555d" stroke="none"/><path d="M1884.5 527l-3.5 4M1895.500 527l3.5 4"/>
<path d="M1887.500 545h6l-3 3.4z" fill="#4b5058" stroke="none"/>
<line x1="1873" y1="554.5" x2="1907" y2="554.5" stroke="#666b72" stroke-width="1" />
<path d="M1884 587C1881 584 1879 580 1875.500 575.500C1875 573.500 1877 572.500 1879 574L1883.500 578L1883 565C1883 562 1886.500 562 1886.500 565L1887 573L1888 562.500C1888 559.500 1891.800 559.500 1891.800 562.500L1892 573L1894 564C1894.500 561 1898 561.500 1897.500 564.500L1896.500 574L1899.500 568.500C1900.500 566 1904 567 1903 570C1902 576 1900 582 1896 587z" fill="#50555d" stroke-width="1.400"/>
<path d="M1876 596l17 17M1893 596l-17 17M1876 601.500v-5.500h5.500M1887.500 596h5.500v5.500M1876 607.500v5.500h5.500"/><circle cx="1894.500" cy="611.500" r="5.500"/><path d="M1898.500 615.500l5 5" stroke-width="3"/>
<path d="M1887.500 632h6l-3 3.400z" fill="#4b5058" stroke="none"/>
<ellipse cx="1889" cy="657" rx="13.500" ry="5.200"/><path d="M1886.500 667v-17h-3.500l6-8l6 8h-3.500v17z" fill="#5a5f66"/><path d="M1884 660.500l-5 3l5 3.500z" fill="#4b5058"/>
<path d="M1887.500 679h6l-3 3.400z" fill="#4b5058" stroke="none"/>
<line x1="1873" y1="688.5" x2="1907" y2="688.5" stroke="#666b72" stroke-width="1" />
<rect x="1875.500" y="694" width="7" height="7" rx="1"/><rect x="1885.500" y="694" width="7" height="7" rx="1"/><rect x="1895.500" y="694" width="7" height="7" rx="1"/><rect x="1875.500" y="705" width="19.500" height="16" rx="1"/><path d="M1881.500 708.500v9l8-4.500z" fill="#4b5058"/>
<circle cx="1902.500" cy="738" r="3.600" fill="#666b72" stroke-width="1"/><path d="M1900.500 737h4l-2 2.600z" fill="#4b5058" stroke="none"/>
</g>
<rect x="414" y="827.500" width="40" height="147" rx="3" fill="#272e3b"/>
<rect x="445" y="828" width="1091" height="121" fill="#9a9b9d" />
<rect x="445" y="949" width="1091" height="25" fill="#c3c4c6" />
<rect x="445.5" y="949.5" width="1090" height="24" fill="none" stroke="#5c5f66" stroke-width="1"/>
<text x="448" y="847.5" font-size="14.6" fill="#16181c" font-family="'DejaVu Sans Mono', 'Liberation Mono', monospace" textLength="106.9" lengthAdjust="spacingAndGlyphs" >Command: REC</text>
<text x="448" y="866.5" font-size="14.6" fill="#16181c" font-family="'DejaVu Sans Mono', 'Liberation Mono', monospace" textLength="61.9" lengthAdjust="spacingAndGlyphs" >RECTANG</text>
<text x="448" y="885.5" font-size="14.6" fill="#16181c" font-family="'DejaVu Sans Mono', 'Liberation Mono', monospace" textLength="655.3" lengthAdjust="spacingAndGlyphs" >Specify first corner point or [Chamfer/Elevation/Fillet/Thickness/Width]:</text>
<text x="448" y="904.5" font-size="14.6" fill="#16181c" font-family="'DejaVu Sans Mono', 'Liberation Mono', monospace" textLength="511.4" lengthAdjust="spacingAndGlyphs" >Specify other corner point or [Area/Dimensions/Rotation]:</text>
<text x="448" y="923.5" font-size="14.6" fill="#16181c" font-family="'DejaVu Sans Mono', 'Liberation Mono', monospace" textLength="556.4" lengthAdjust="spacingAndGlyphs" >Command: Specify opposite corner or [Fence/WPolygon/CPolygon]:</text>
<text x="448" y="942.5" font-size="14.6" fill="#16181c" font-family="'DejaVu Sans Mono', 'Liberation Mono', monospace" textLength="214.8" lengthAdjust="spacingAndGlyphs" >Command: _.erase 1 found</text>
<text x="491" y="967" font-size="14.6" fill="#6a6c70" font-style="italic" font-family="'DejaVu Sans Mono', 'Liberation Mono', monospace" textLength="125" lengthAdjust="spacingAndGlyphs" >Type a command</text>
<rect x="419.0" y="833.0" width="2" height="1.9" fill="#bcbcbc" />
<rect x="422.7" y="833.0" width="2" height="1.9" fill="#bcbcbc" />
<rect x="426.4" y="833.0" width="2" height="1.9" fill="#bcbcbc" />
<rect x="430.1" y="833.0" width="2" height="1.9" fill="#bcbcbc" />
<rect x="433.8" y="833.0" width="2" height="1.9" fill="#bcbcbc" />
<rect x="437.5" y="833.0" width="2" height="1.9" fill="#bcbcbc" />
<rect x="419.0" y="836.6" width="2" height="1.9" fill="#bcbcbc" />
<rect x="422.7" y="836.6" width="2" height="1.9" fill="#bcbcbc" />
<rect x="426.4" y="836.6" width="2" height="1.9" fill="#bcbcbc" />
<rect x="430.1" y="836.6" width="2" height="1.9" fill="#bcbcbc" />
<rect x="433.8" y="836.6" width="2" height="1.9" fill="#bcbcbc" />
<rect x="437.5" y="836.6" width="2" height="1.9" fill="#bcbcbc" />
<path d="M421.800 849.300l10.400 10.400M432.200 849.300l-10.400 10.400" stroke="#bebebe" stroke-width="2" fill="none"/>
<path d="M420.300 892.300l10-10" stroke="#b8b8b8" stroke-width="2.800" stroke-linecap="round" fill="none"/><path d="M428.300 883.300a4.800 4.800 0 0 1 5.700-6.800l-3.100 3.100l.9 2.800l2.800.9l3.100-3.100a4.800 4.800 0 0 1-6.800 5.700z" fill="#b8b8b8"/>
<rect x="450.500" y="954.500" width="18" height="13" fill="#b2b3b5" stroke="#5a5c60" stroke-width="1"/><rect x="450" y="954" width="19" height="3" fill="#5a5c60"/><path d="M453 960l3 2l-3 2M457.500 964.500h4" stroke="#44464a" stroke-width="1" fill="none"/>
<path d="M472 959.500h9l-4.500 5z" fill="#3a3c40"/>
<path d="M1520 965.500h10l-5-5z" fill="#44464a"/>
<text transform="translate(25.400,686) rotate(-90)" font-size="14.5" fill="#e4e4e4" textLength="171" lengthAdjust="spacingAndGlyphs">Layer Properties Manager</text>
<rect x="14.0" y="235.8" width="1.3" height="1.3" fill="#d4d4d4" />
<rect x="14.0" y="238.0" width="1.3" height="1.3" fill="#d4d4d4" />
<rect x="16.2" y="235.8" width="1.3" height="1.3" fill="#d4d4d4" />
<rect x="16.2" y="238.0" width="1.3" height="1.3" fill="#d4d4d4" />
<rect x="18.4" y="235.8" width="1.3" height="1.3" fill="#d4d4d4" />
<rect x="18.4" y="238.0" width="1.3" height="1.3" fill="#d4d4d4" />
<rect x="20.6" y="235.8" width="1.3" height="1.3" fill="#d4d4d4" />
<rect x="20.6" y="238.0" width="1.3" height="1.3" fill="#d4d4d4" />
<rect x="22.8" y="235.8" width="1.3" height="1.3" fill="#d4d4d4" />
<rect x="22.8" y="238.0" width="1.3" height="1.3" fill="#d4d4d4" />
<path d="M28 980H102L90.500 1010H16z" fill="#3b4453"/>
<text x="37.3" y="1001" font-size="15.2" fill="#ffffff" font-weight="bold" textLength="43.4" lengthAdjust="spacingAndGlyphs" >Model</text>
<text x="111" y="1001" font-size="15.2" fill="#e6e6e6" textLength="51.3" lengthAdjust="spacingAndGlyphs" >Layout1</text>
<text x="193" y="1001" font-size="15.2" fill="#e6e6e6" textLength="51.3" lengthAdjust="spacingAndGlyphs" >Layout2</text>
<line x1="173.5" y1="1004" x2="183" y2="986" stroke="#596272" stroke-width="1.2" />
<line x1="256.5" y1="1004" x2="263.5" y2="986" stroke="#596272" stroke-width="1.2" />
<line x1="306.5" y1="1004" x2="313.5" y2="986" stroke="#596272" stroke-width="1.2" />
<path d="M277 995h15.600M284.800 987.200v15.600" stroke="#f0f0f0" stroke-width="2.600" fill="none"/>
<rect x="1170" y="982" width="59" height="30" fill="#3b4453" />
<rect x="1232" y="982" width="80" height="30" fill="#3b4453" />
<rect x="1315" y="982" width="211" height="30" fill="#3b4453" />
<rect x="1529" y="982" width="132" height="30" fill="#3b4453" />
<rect x="1664" y="982" width="50" height="30" fill="#3b4453" />
<rect x="1715" y="982" width="30" height="30" fill="#3b4453" />
<rect x="1748" y="982" width="30" height="30" fill="#3b4453" />
<rect x="1781" y="982" width="68" height="30" fill="#3b4453" />
<rect x="1852" y="982" width="60" height="30" fill="#3b4453" />
<rect x="1346" y="983" width="28" height="28" fill="#5d90c6" />
<rect x="1447" y="983" width="28" height="28" fill="#5d90c6" />
<rect x="1477" y="983" width="28" height="28" fill="#5d90c6" />
<rect x="1530" y="983" width="28" height="28" fill="#5d90c6" />
<text x="1175" y="1002.7" font-size="15.2" fill="#f2f2f2" textLength="49.5" lengthAdjust="spacingAndGlyphs" >MODEL</text>
<path d="M1241.700 987v19M1246.800 987v19M1251.900 987v19M1237.300 991.300h19M1237.300 996.300h19M1237.300 1001.400h19" stroke="#e2e2e2" stroke-width="1.200"/>
<rect x="1269.2" y="989.2" width="2.8" height="2.8" fill="#e2e2e2" />
<rect x="1269.2" y="995.0" width="2.8" height="2.8" fill="#e2e2e2" />
<rect x="1269.2" y="1000.8000000000001" width="2.8" height="2.8" fill="#e2e2e2" />
<rect x="1275.2" y="989.2" width="2.8" height="2.8" fill="#e2e2e2" />
<rect x="1275.2" y="995.0" width="2.8" height="2.8" fill="#e2e2e2" />
<rect x="1275.2" y="1000.8000000000001" width="2.8" height="2.8" fill="#e2e2e2" />
<rect x="1281.2" y="989.2" width="2.8" height="2.8" fill="#e2e2e2" />
<rect x="1281.2" y="995.0" width="2.8" height="2.8" fill="#e2e2e2" />
<rect x="1281.2" y="1000.8000000000001" width="2.8" height="2.8" fill="#e2e2e2" />
<path d="M1296.7 993.8h10l-5.0 5.2z" fill="#d4d4d4"/>
<path d="M1320.600 987.300V1006.300H1340" fill="none" stroke="#e2e2e2" stroke-width="1.300"/><path d="M1320.600 1000.800h5.400v5.500" fill="none" stroke="#e2e2e2" stroke-width="1"/>
<circle cx="1357.200" cy="996.800" r="7.400" fill="none" stroke="#f4f4f4" stroke-width="1.300"/><path d="M1357.200 996.800H1369.700M1357.200 996.800L1367 987.900" stroke="#f4f4f4" stroke-width="1.300"/>
<path d="M1379.6 993.8h10l-5.0 5.2z" fill="#d4d4d4"/>
<path d="M1410.300 987v19" stroke="#3fc25a" stroke-width="1.300"/><path d="M1402.200 988.500L1417.700 1003.700" stroke="#d24a4a" stroke-width="1.300"/><rect x="1408.600" y="994.500" width="3.400" height="3.400" fill="#3b4453" stroke="#e2e2e2" stroke-width="0.900"/>
<path d="M1430.0 993.8h10l-5.0 5.2z" fill="#d4d4d4"/>
<path d="M1451 1004H1470.800" stroke="#d6e2f0" stroke-width="1.600"/><path d="M1451 1004L1470.200 988.500" stroke="#f4f4f4" stroke-width="1.300"/><rect x="1457.300" y="994.600" width="3.400" height="3.400" fill="#f4f4f4"/>
<rect x="1483.800" y="989.800" width="17" height="16.500" fill="none" stroke="#f4f4f4" stroke-width="1.300"/><rect x="1481.300" y="987.600" width="5.200" height="5.200" fill="#5d90c6" stroke="#f4f4f4" stroke-width="1"/>
<path d="M1510.8 993.8h10l-5.0 5.2z" fill="#d4d4d4"/>
<path d="M0 -10L3.300 -2.400L2.300 -0.600L8.800 10L0 5L-8.800 10L-2.300 -0.600L-3.300 -2.400z" fill="#ffffff" transform="translate(1542.5,997)"/>
<circle cx="1550.200" cy="991.300" r="3.400" fill="none" stroke="#eef3f9" stroke-width="1"/>
<path d="M0 -10L3.300 -2.400L2.300 -0.600L8.800 10L0 5L-8.800 10L-2.300 -0.600L-3.300 -2.400z" fill="#dcdcdc" transform="translate(1572.8,997)"/>
<path d="M1581.200 987.200l-4 4.800h2.300l-2 4.200l5-5.600h-2.400z" fill="#dcdcdc"/>
<path d="M0 -10L3.300 -2.400L2.300 -0.600L8.800 10L0 5L-8.800 10L-2.300 -0.600L-3.300 -2.400z" fill="#dcdcdc" transform="translate(1603.3,997)"/>
<text x="1625.2" y="1002.5" font-size="15.2" fill="#f2f2f2" textLength="16.0" lengthAdjust="spacingAndGlyphs" >1:1</text>
<path d="M1646.5 993.3h10l-5.0 5.2z" fill="#d4d4d4"/>
<g transform="translate(1679,996.300)">
<rect x="-2.300" y="-10.600" width="4.600" height="5" fill="#dcdcdc" transform="rotate(0)"/>
<rect x="-2.300" y="-10.600" width="4.600" height="5" fill="#dcdcdc" transform="rotate(45)"/>
<rect x="-2.300" y="-10.600" width="4.600" height="5" fill="#dcdcdc" transform="rotate(90)"/>
<rect x="-2.300" y="-10.600" width="4.600" height="5" fill="#dcdcdc" transform="rotate(135)"/>
<rect x="-2.300" y="-10.600" width="4.600" height="5" fill="#dcdcdc" transform="rotate(180)"/>
<rect x="-2.300" y="-10.600" width="4.600" height="5" fill="#dcdcdc" transform="rotate(225)"/>
<rect x="-2.300" y="-10.600" width="4.600" height="5" fill="#dcdcdc" transform="rotate(270)"/>
<rect x="-2.300" y="-10.600" width="4.600" height="5" fill="#dcdcdc" transform="rotate(315)"/>
<circle r="8" fill="#dcdcdc"/><circle r="3.700" fill="#3b4453"/></g>
<path d="M1698.9 993.8h10l-5.0 5.2z" fill="#d4d4d4"/>
<path d="M1720 996.500h19M1729.500 987v19" stroke="#ececec" stroke-width="2.600"/>
<rect x="1753.500" y="988" width="7" height="7" fill="none" stroke="#d0d0d0" stroke-width="1"/><circle cx="1768.500" cy="995.800" r="4.200" fill="none" stroke="#d0d0d0" stroke-width="1"/><path d="M1761 999.600l4.800 6.900h-9.600z" fill="none" stroke="#d0d0d0" stroke-width="1"/>
<path d="M1785 984h14.500l6.100 3.800v12.200l-5.600 1.500l-4.500-3.500H1785z" fill="#3a6fb2"/><path d="M1799.500 984l6.100 3.800v3l-6.100-2.500z" fill="#7fa9dc"/>
<path d="M1790.300 984v14.200M1785 989.500h12.500" stroke="#f2f6fb" stroke-width="1.300"/><circle cx="1790.300" cy="989.500" r="1.900" fill="#dce8f6"/><circle cx="1790.300" cy="989.500" r="0.800" fill="#3a6fb2"/>
<path d="M1785 998.500h10.400l-1.400 3.200l1.400 4H1785z" fill="#f6b828"/>
<path d="M1795.300 1002.500l4.800 4.600l8.700-9" fill="none" stroke="#44b85c" stroke-width="2.800"/>
<path d="M1823.800 991.500a7.800 7.800 0 1 1 10.500 10.300" fill="none" stroke="#dcdcdc" stroke-width="1.300"/><path d="M1820.800 989.300l1.300 4.900l4-2.900z" fill="#dcdcdc"/><path d="M1830.200 990.300v6.200h3.400" fill="none" stroke="#dcdcdc" stroke-width="1.300"/>
<path d="M1819 995.400h6.800l3 3v8.400H1819z" fill="#f2f2f2"/><rect x="1820" y="996.600" width="7.800" height="6.400" fill="#3f74b8"/><path d="M1821.500 996.600v6.400M1820 998.500h4" stroke="#dce8f6" stroke-width="0.700"/><path d="M1820 1003h7.800v2.800H1820z" fill="#f6b828"/>
<circle cx="1834.400" cy="1002.700" r="4.600" fill="#5bb3f0"/><rect x="1833.750" y="1002" width="1.300" height="3.300" fill="#fff"/><rect x="1833.750" y="999.900" width="1.300" height="1.300" fill="#fff"/>
<rect x="1857.600" y="990" width="19" height="13.500" fill="none" stroke="#e4e4e4" stroke-width="1.100"/><path d="M1870 992h4.500v4.500zM1864 1001.500h-4.500v-4.500z" fill="#e4e4e4"/><path d="M1874 992.500l-3.500 3.500M1860 1001l3.500-3.500" stroke="#e4e4e4" stroke-width="1.100"/>
<rect x="1887" y="988" width="20" height="2.5" fill="#ececec" />
<rect x="1887" y="995.2" width="20" height="2.5" fill="#ececec" />
<rect x="1887" y="1002.8" width="20" height="2.5" fill="#ececec" />
</svg>
</body></html>
